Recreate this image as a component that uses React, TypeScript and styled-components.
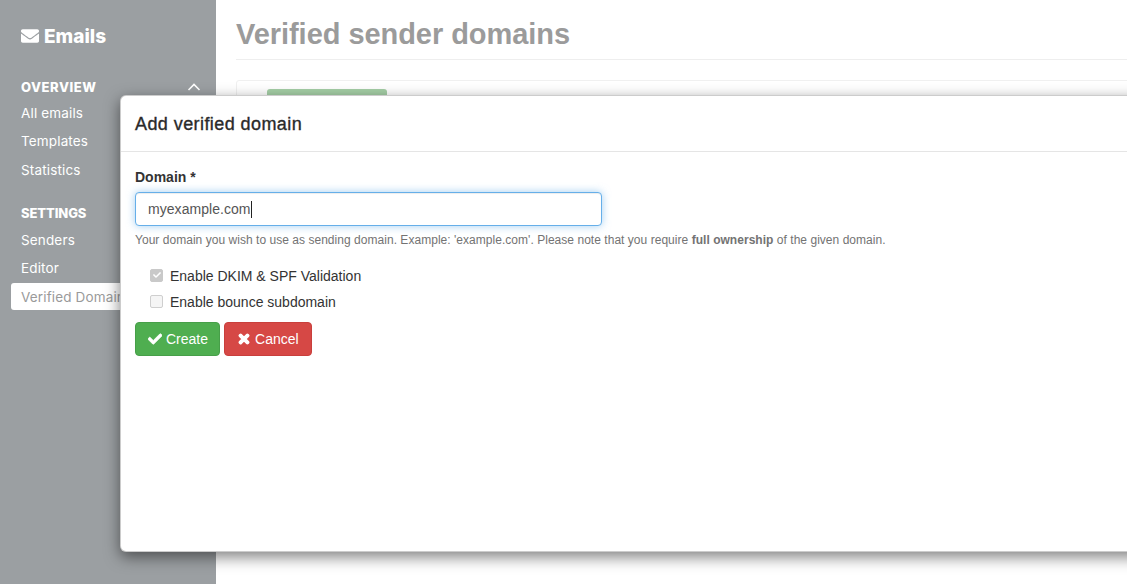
import React from "react";
import styled, { createGlobalStyle } from "styled-components";
import { FaEnvelope, FaCheck, FaTimes } from "react-icons/fa";

const Global = createGlobalStyle`
  html, body { margin: 0; padding: 0; height: 100%; background: #fff; }
  body { font-family: "Liberation Sans", Arial, sans-serif; overflow: hidden; }
  #root { height: 584px; }
  * { box-sizing: border-box; }
`;

const Page = styled.div`
  position: relative;
  display: flex;
  width: 1127px;
  height: 584px;
  overflow: hidden;
`;

const Sidebar = styled.aside`
  flex: 0 0 216px;
  background: #9b9fa2;
  padding: 25px 0 0 11px;
  font-family: "Inter", "Liberation Sans", sans-serif;
  color: #fff;
`;

const Brand = styled.div`
  display: flex;
  align-items: center;
  gap: 5px;
  padding-left: 10px;
  height: 22px;
  font-size: 19px;
  font-weight: 800;
`;

const Section = styled.div<{ $top: number }>`
  margin-top: ${(p) => p.$top}px;
`;

const SectionHead = styled.div<{ $spacing: number }>`
  display: flex;
  align-items: center;
  justify-content: space-between;
  padding: 0 15px 0 10px;
  height: 18px;
  font-size: 13px;
  font-weight: 800;
  letter-spacing: ${(p) => p.$spacing}px;
`;

const NavItem = styled.div<{ $active?: boolean }>`
  display: flex;
  align-items: center;
  height: ${(p) => (p.$active ? "26.5px" : "28.3px")};
  margin-top: ${(p) => (p.$active ? "1px" : "0")};
  padding-left: 10px;
  font-size: 13.5px;
  letter-spacing: 0.15px;
  border-radius: 3px;
  white-space: nowrap;
  overflow: hidden;
  color: ${(p) => (p.$active ? "#9a9a9a" : "#fff")};
  background: ${(p) => (p.$active ? "#fff" : "transparent")};
`;

const NavList = styled.div<{ $top: number }>`
  margin-top: ${(p) => p.$top}px;
`;

const Main = styled.main`
  flex: 1;
  padding: 16px 0 0 20px;
  min-width: 0;
`;

const Title = styled.h1`
  margin: 0;
  height: 44px;
  font-size: 29px;
  line-height: 36px;
  letter-spacing: -0.05px;
  font-weight: 700;
  color: #9b9b9b;
  border-bottom: 1px solid #eeeeee;
  white-space: nowrap;
`;

const Panel = styled.div`
  margin: 20px -10px 0 0;
  height: 60px;
  border: 1px solid #f0f0f0;
  border-radius: 3px;
  padding: 8px 0 0 30px;
`;

const GhostButton = styled.div`
  width: 120px;
  height: 34px;
  background: #a5cfa6;
  border-radius: 3px;
`;

const Modal = styled.div`
  position: absolute;
  left: 120px;
  top: 95px;
  width: 1040px;
  height: 457px;
  background: #fff;
  border-radius: 6px;
  border: 1px solid rgba(0, 0, 0, 0.2);
  box-shadow: 0 5px 15px rgba(0, 0, 0, 0.5);
  color: #333;
`;

const ModalHeader = styled.div`
  height: 56px;
  padding: 2px 14px 0;
  display: flex;
  align-items: center;
  border-bottom: 1px solid #e5e5e5;
`;

const ModalTitle = styled.h4`
  margin: 0;
  font-size: 18px;
  font-weight: 400;
  letter-spacing: 0.42px;
  -webkit-text-stroke: 0.35px #2a2a2a;
  color: #2a2a2a;
`;

const ModalBody = styled.div`
  padding: 17px 14px;
`;

const Label = styled.label`
  display: block;
  font-size: 14px;
  line-height: 17px;
  font-weight: 700;
`;

const Input = styled.div`
  margin-top: 6px;
  width: 467px;
  height: 34px;
  padding: 0 12px;
  display: flex;
  align-items: center;
  font-size: 14px;
  letter-spacing: 0.05px;
  color: #555;
  background: #fff;
  border: 1px solid #66afe9;
  border-radius: 4px;
  box-shadow: inset 0 1px 1px rgba(0, 0, 0, 0.075), 0 0 8px rgba(102, 175, 233, 0.6);
`;

const Caret = styled.span`
  display: inline-block;
  width: 1px;
  height: 17px;
  background: #222;
`;

const Help = styled.div`
  margin-top: 7px;
  font-size: 12px;
  line-height: 15px;
  letter-spacing: 0.035px;
  color: #737373;
  white-space: nowrap;
`;

const CheckRow = styled.label`
  display: flex;
  align-items: center;
  gap: 7px;
  height: 26px;
  padding-left: 15px;
  font-size: 14px;
  color: #333;
`;

const CheckList = styled.div`
  margin-top: 15px;
`;

const Box = styled.span<{ $checked?: boolean }>`
  width: 13px;
  height: 13px;
  border-radius: 2px;
  display: flex;
  align-items: center;
  justify-content: center;
  color: #fff;
  background: ${(p) => (p.$checked ? "#c9c9c9" : "#f5f5f5")};
  border: 1px solid ${(p) => (p.$checked ? "#c9c9c9" : "#cfcfcf")};
  position: relative;
  top: -1px;
`;

const Actions = styled.div`
  display: flex;
  gap: 4px;
  margin-top: 7px;
`;

const Button = styled.button<{ $bg: string; $bd: string; $right: number }>`
  display: flex;
  align-items: center;
  gap: 4px;
  height: 34px;
  padding: 0 ${(p) => p.$right}px 0 12px;
  font: 14px "Liberation Sans", Arial, sans-serif;
  color: #fff;
  border-radius: 4px;
  border: 1px solid ${(p) => p.$bd};
  background: ${(p) => p.$bg};
`;

const Chevron = () => (
  <svg width="14" height="8" viewBox="0 0 14 8" fill="none" stroke="#fff" strokeWidth="1.6">
    <path d="M1.5 7L7 1.5L12.5 7" />
  </svg>
);

export default function App() {
  return (
    <>
      <Global />
      <Page>
        <Sidebar>
          <Brand>
            <FaEnvelope size={18} />
            <span>Emails</span>
          </Brand>
          <Section $top={31}>
            <SectionHead $spacing={0.55}>
              <span>OVERVIEW</span>
              <Chevron />
            </SectionHead>
            <NavList $top={3}>
              <NavItem>All emails</NavItem>
              <NavItem>Templates</NavItem>
              <NavItem>Statistics</NavItem>
            </NavList>
          </Section>
          <Section $top={20}>
            <SectionHead $spacing={-0.1}>
              <span>SETTINGS</span>
            </SectionHead>
            <NavList $top={4}>
              <NavItem>Senders</NavItem>
              <NavItem>Editor</NavItem>
              <NavItem $active>Verified Domains</NavItem>
            </NavList>
          </Section>
        </Sidebar>
        <Main>
          <Title>Verified sender domains</Title>
          <Panel>
            <GhostButton />
          </Panel>
        </Main>
        <Modal>
          <ModalHeader>
            <ModalTitle>Add verified domain</ModalTitle>
          </ModalHeader>
          <ModalBody>
            <Label>Domain *</Label>
            <Input>
              myexample.com
              <Caret />
            </Input>
            <Help>
              Your domain you wish to use as sending domain. Example: 'example.com'. Please note that you require{" "}
              <b>full ownership</b> of the given domain.
            </Help>
            <CheckList>
              <CheckRow>
                <Box $checked>
                  <FaCheck size={8} />
                </Box>
                Enable DKIM &amp; SPF Validation
              </CheckRow>
              <CheckRow>
                <Box />
                Enable bounce subdomain
              </CheckRow>
            </CheckList>
            <Actions>
              <Button $bg="#4fae50" $bd="#479f49" $right={11}>
                <FaCheck size={14} stroke="currentColor" strokeWidth={30} />
                Create
              </Button>
              <Button $bg="#d64845" $bd="#c93f3c" $right={12}>
                <FaTimes size={14} stroke="currentColor" strokeWidth={50} />
                Cancel
              </Button>
            </Actions>
          </ModalBody>
        </Modal>
      </Page>
    </>
  );
}
